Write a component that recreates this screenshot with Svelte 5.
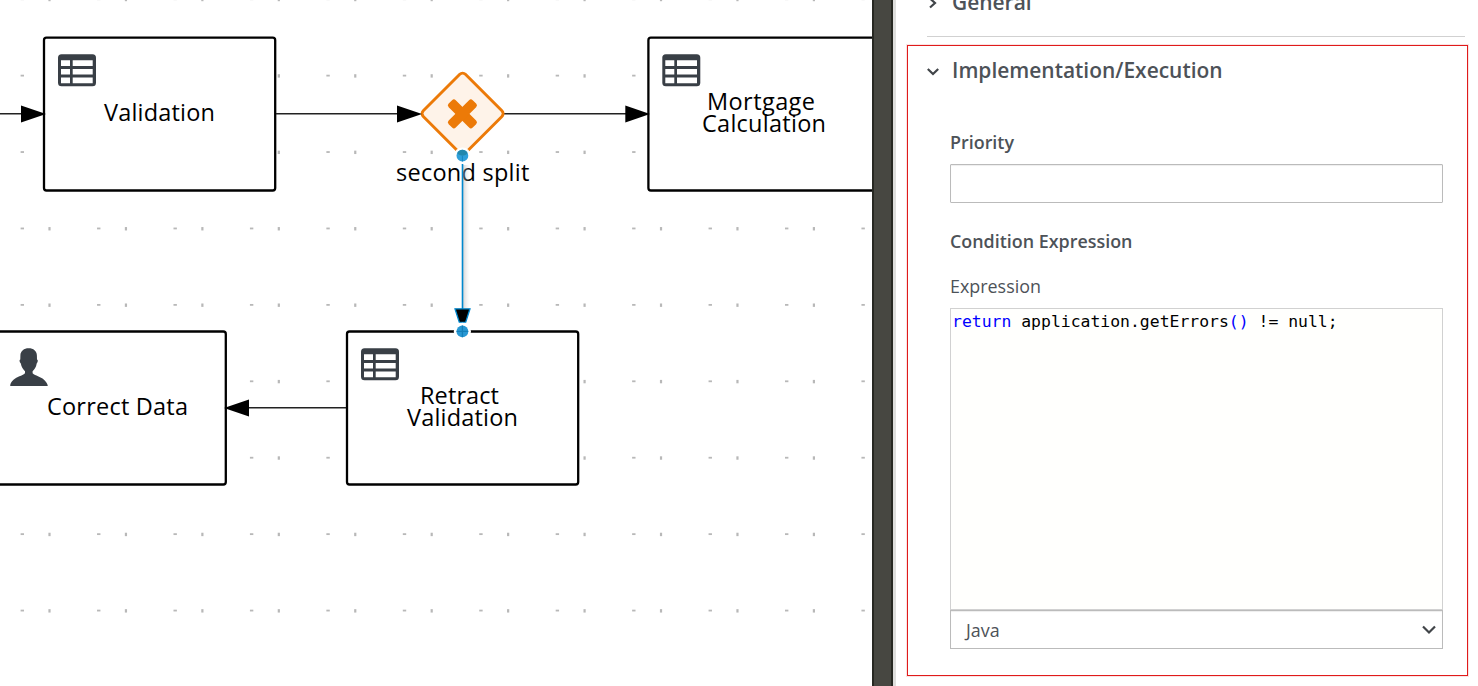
<script>
  const gridRows = Array.from({ length: 9 }, (_, i) => -1 + i * 76.42);
  const gridCols = Array.from({ length: 12 }, (_, i) => i * 76.44);
  const tables = [[58, 54.3], [662.3, 54.3], [361, 348.3]];
  const arrows = [
    'M21 105.5V122.5L46 114Z',
    'M397 105.5V122.5L422 114Z',
    'M625.3 105.5V122.5L650 114Z',
    'M249 399.5V416.5L224 408Z'
  ];
</script>

<main>
  <section class="canvas">
    <svg width="872" height="686" viewBox="0 0 872 686">
      <defs>
        <linearGradient id="glow"><stop offset="0" stop-color="#aaa" stop-opacity=".5" /><stop offset="1" stop-color="#ddd" stop-opacity="0" /></linearGradient>
      </defs>
      <g fill="#b8b8b8">
        {#each gridRows as y}
          {#each gridCols as x}
            <rect x={x + 20.6} y={y - 0.7} width="3.4" height="1.8" />
            <rect x={x + 48.4} y={y - 1.2} width="2.2" height="3.4" />
          {/each}
        {/each}
      </g>

      <g fill="#fff" stroke="#000" stroke-width="2.3">
        <rect x="44" y="37.7" width="231.2" height="152.8" rx="2.5" />
        <rect x="648.4" y="37.7" width="240" height="152.8" rx="2.5" />
        <rect x="-10" y="331.5" width="235.8" height="153" rx="2.5" />
        <rect x="347" y="331.5" width="231.2" height="153" rx="2.5" />
      </g>

      <g stroke="#222" stroke-width="1.6">
        <path d="M0 113.8H22M276 113.8H398M504 113.8H626M248 407.8H346" />
      </g>

      {#each tables as [x, y]}
        <g transform="translate({x} {y})">
          <rect width="38" height="32" rx="3.5" fill="#393f46" />
          <path fill="#fff" d="M3 6h9v5.7H3zM14.7 6H34.7v5.7H14.7zM3 14.6h9v5.7H3zM14.7 14.6H34.7v5.7H14.7zM3 23.2h9v5.7H3zM14.7 23.2H34.7v5.7H14.7z" />
        </g>
      {/each}

      <path fill="#393f46" d="M28.7 348.3C24 348.3 20.5 351 20.4 355.5L20.3 359.5C19.1 359.8 19.3 362 20.8 363.4C21.4 367 23.2 369.5 25 371.2V373.3C22 376.2 17 376.5 13.5 379.8C11.3 381.7 10.2 383.5 10.2 386H47.8C47.5 383.5 46 381.5 44 379.7C40.3 376.5 35.5 376 32.6 373.3V371.2C34.5 369.5 36.2 367 36.7 363.4C38 362 38.2 359.8 37 359.5L36.9 355.5C36.8 351 33.4 348.3 28.7 348.3Z" />

      <rect x="432.8" y="83.8" width="59.6" height="59.6" rx="4" fill="#fef3e9" stroke="#ec7a08" stroke-width="2.9" transform="rotate(45 462.6 113.6)" />
      <g fill="#ec7a08" transform="rotate(45 462.4 113.9)">
        <rect x="445.4" y="108.9" width="34" height="10" rx="2.6" />
        <rect x="457.4" y="96.9" width="10" height="34" rx="2.6" />
      </g>
      {#each arrows as d}<path {d} />{/each}

      <g class="label">
        <text x="104" y="121" textLength="111">Validation</text>
        <text x="707" y="110" textLength="108">Mortgage</text>
        <text x="702" y="132" textLength="124">Calculation</text>
        <text x="47" y="415" textLength="141">Correct Data</text>
        <text x="420" y="404" textLength="79">Retract</text>
        <text x="407" y="426" textLength="111">Validation</text>
        <text x="396" y="181" textLength="133.4">second split</text>
      </g>

      <rect x="463" y="165" width="7" height="143" fill="url(#glow)" />
      <path d="M462.5 164V309" stroke="#0088ce" stroke-width="1.6" />
      <path d="M455 308.8H470L465.6 322.5H459.4Z" stroke="#0088ce" stroke-width="1.3" />
      <rect x="457" y="322.8" width="11" height="3" fill="#fff" />
      <circle cx="462.4" cy="155.7" r="8.3" fill="#fff" />
      <circle cx="462.4" cy="155.7" r="5.9" fill="#30a0da" />
      <path d="M457.4 152.6A5.9 5.9 0 0 1 467.4 152.6Q467 155.3 462.4 155.7Q457.8 155.3 457.4 152.6Z" fill="#2388ad" />
      <path d="M462.4 156V161.5" stroke="#1587c4" />
      <circle cx="462.4" cy="331.4" r="8.6" fill="#fff" />
      <circle cx="462.4" cy="331.4" r="5.9" fill="#2898d4" />
      <path d="M456.5 331.4H468.3M462.4 325.5V337.3" stroke="#147fb9" stroke-width="1.3" />
    </svg>
  </section>

  <div class="splitter"></div>

  <aside>
    <header class="general">
      <svg width="8" height="12" viewBox="0 0 8 12"><path d="M1 1.5L6 6L1 10.5" /></svg>
      <h2>General</h2>
    </header>
    <section class="group">
      <header>
        <svg width="12" height="8" viewBox="0 0 12 8"><path d="M.8 1L6 6L11.2 1" /></svg>
        <h2 class="wide">Implementation/Execution</h2>
      </header>
      <label class="priority" for="priority">Priority</label>
      <input id="priority" />
      <h3>Condition Expression</h3>
      <p>Expression</p>
      <div class="code"><span>return</span> application.getErrors<span>()</span> != null;</div>
      <div class="select">
        <span>Java</span>
        <svg width="14" height="10" viewBox="0 0 14 10"><path d="M1 1.5L7 7.5L13 1.5" /></svg>
      </div>
    </section>
  </aside>
</main>

<style>
  :global(body) { margin: 0; background: #fff; overflow: hidden; }
  main { display: flex; width: 1478px; height: 686px; overflow: hidden; font-family: "Open Sans", sans-serif; color: #4d5258; }
  .canvas { width: 872px; flex: none; }
  .canvas svg { display: block; }
  .label { font-size: 23.5px; fill: #000; }
  .splitter { box-sizing: border-box; width: 21px; flex: none; background: #474741; border: solid #272822; border-width: 0 2px; }
  aside { box-sizing: border-box; flex: 1; border-left: 3px solid #dededc; padding: 0 9px 0 11px; }
  aside svg { fill: none; stroke: #414549; stroke-width: 2.2; flex: none; }
  h2, h3, p { margin: 0; }
  h2 { font-size: 20.95px; line-height: 28px; font-weight: 600; white-space: nowrap; }
  .general { box-sizing: border-box; display: flex; align-items: center; height: 37px; margin: 0 4px 0 20px; padding: 0 0 32px 2px; border-bottom: 1px solid #d1d1d1; }
  .general h2 { margin: 0 0 0 15px; flex: none; }
  .general svg { margin-top: 2px; }
  .group { box-sizing: border-box; width: 561px; height: 631px; margin-top: 8px; border: 1px solid #e01b1b; box-shadow: 0 0 0 1px #fae3e3; padding: 10px 24px 0 42px; }
  .group header { display: flex; align-items: center; height: 28px; margin-left: -23px; }
  .group header svg { margin-top: 3px; }
  .wide { margin-left: 13px; }
  label, h3 { display: block; font-size: 17.9px; line-height: 24px; font-weight: 600; }
  .priority { margin-top: 46px; }
  input { box-sizing: border-box; display: block; width: 493px; height: 39px; margin: 10px 0 0; border: 1px solid #bbb; border-radius: 1px; box-shadow: inset 0 1px 1px #eee; outline: 0; padding: 0 8px; }
  h3 { margin-top: 26px; }
  p { font-size: 17.9px; line-height: 24px; margin-top: 21px; }
  .code { box-sizing: border-box; width: 493px; height: 302px; margin-top: 10px; border: 1px solid #d1d1d1; background: #fffffd; padding: 1px 0 0 1px; color: #000; font: 16.43px/24px "DejaVu Sans Mono", monospace; white-space: pre; }
  .code span { color: #00f; }
  .select { box-sizing: border-box; width: 493px; height: 39px; border: 1px solid #bbb; box-shadow: inset 0 1px 1px #eee; display: flex; align-items: center; justify-content: space-between; padding: 0 6px 0 15px; font-size: 17.9px; }
</style>
